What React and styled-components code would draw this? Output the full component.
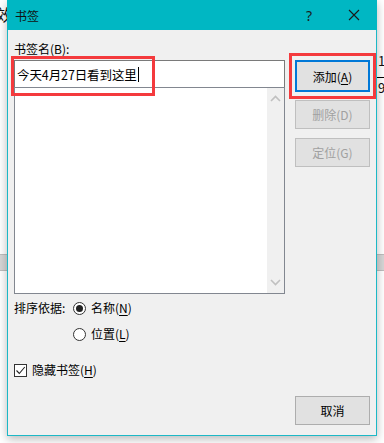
import React from 'react'
import styled, { createGlobalStyle } from 'styled-components'

const GlobalStyle = createGlobalStyle`
  html, body {
    margin: 0;
    padding: 0;
    background: #ffffff;
    font-family: "Noto Sans CJK SC", "Microsoft YaHei", "Noto Sans", sans-serif;
    font-size: 12px;
    color: #000;
  }
`;

const App = () => {
  return (
    <Page>
      <GlobalStyle />
      <Backdrop>
        <BackGlyph style={{ left: -4, top: 6 }}>效</BackGlyph>
        <BackGlyph style={{ left: 378, top: 54, fontSize: 13 }}>1</BackGlyph>
        <BackRule />
        <BackGlyph style={{ left: 378, top: 81, fontSize: 13 }}>9</BackGlyph>
        <GrayBand />
      </Backdrop>

      <Dialog>
        <TitleBar>
          <Title>书签</Title>
          <TitleButtons>
            <Help>?</Help>
            <CloseIcon width="12" height="12" viewBox="0 0 12 12">
              <path d="M1 1 L11 11 M11 1 L1 11" stroke="#1a1a1a" strokeWidth="1.1" fill="none" />
            </CloseIcon>
          </TitleButtons>
        </TitleBar>

        <Body>
          <Main>
            <LeftCol>
              <Label>书签名(<U>B</U>):</Label>
              <NameInput>
                今天4月27日看到这里<Caret />
              </NameInput>
              <ListBox>
                <ListArea />
                <ScrollBar>
                  <Chevron width="11" height="7" viewBox="0 0 11 7">
                    <path d="M1 6 L5.5 1.5 L10 6" stroke="#c0c0c0" strokeWidth="1.6" fill="none" />
                  </Chevron>
                  <Chevron width="11" height="7" viewBox="0 0 11 7">
                    <path d="M1 1 L5.5 5.5 L10 1" stroke="#c0c0c0" strokeWidth="1.6" fill="none" />
                  </Chevron>
                </ScrollBar>
              </ListBox>
              <SortRow>
                <SortLabel>排序依据:</SortLabel>
                <RadioGroup>
                  <RadioItem>
                    <Radio $checked />
                    <span>名称(<U>N</U>)</span>
                  </RadioItem>
                  <RadioItem>
                    <Radio />
                    <span>位置(<U>L</U>)</span>
                  </RadioItem>
                </RadioGroup>
              </SortRow>
              <CheckRow>
                <CheckBox>
                  <svg width="11" height="11" viewBox="0 0 11 11">
                    <path d="M1.5 5.5 L4.3 8.5 L9.8 2" stroke="#222" strokeWidth="1.1" fill="none" />
                  </svg>
                </CheckBox>
                <span>隐藏书签(<U>H</U>)</span>
              </CheckRow>
            </LeftCol>

            <RightCol>
              <Button $default>添加(<U>A</U>)</Button>
              <Button $disabled>删除(D)</Button>
              <Button $disabled>定位(G)</Button>
            </RightCol>
          </Main>

          <Footer>
            <Button>取消</Button>
          </Footer>
        </Body>

        <Highlight style={{ left: 3, top: 56, width: 138, height: 34 }} />
        <Highlight style={{ left: 281, top: 53, width: 81, height: 40 }} />
      </Dialog>
    </Page>
  )
}

export default App;

const Page = styled.div`
  position: relative;
  width: 384px;
  height: 443px;
  overflow: hidden;
  padding-left: 7px;
  box-sizing: border-box;
`;

const Backdrop = styled.div`
  position: absolute;
  inset: 0;
`;

const BackGlyph = styled.span`
  position: absolute;
  font-size: 16px;
  color: #111;
  line-height: 1;
`;

const BackRule = styled.div`
  position: absolute;
  left: 377px;
  top: 77px;
  width: 10px;
  height: 1px;
  background: #000;
`;

const GrayBand = styled.div`
  position: absolute;
  left: 0;
  right: 0;
  top: 254px;
  height: 15px;
  background: #d6d6d6;
  border-top: 1px solid #bdbdbd;
  border-bottom: 1px solid #bdbdbd;
`;

const Dialog = styled.div`
  position: relative;
  width: 370px;
  height: 436px;
  box-sizing: border-box;
  background: #f0f0f0;
  border: 1px solid #1cb8c6;
  border-top: none;
  box-shadow: 0 3px 9px rgba(0, 0, 0, 0.28);
  display: flex;
  flex-direction: column;
`;

const TitleBar = styled.div`
  height: 30px;
  margin: 0 -1px;
  background: #00b7c3;
  display: flex;
  align-items: center;
  justify-content: space-between;
  padding: 0 0 0 8px;
`;

const Title = styled.span`
  font-size: 12px;
  color: #111;
`;

const TitleButtons = styled.div`
  display: flex;
  align-items: center;
  gap: 36px;
  padding-right: 17px;
  height: 100%;
`;

const Help = styled.span`
  font-family: "Segoe UI", "Noto Sans", sans-serif;
  font-size: 14px;
  color: #1a1a1a;
`;

const CloseIcon = styled.svg`
  display: block;
`;

const Body = styled.div`
  flex: 1;
  display: flex;
  flex-direction: column;
  padding: 11px 6px 10px 6px;
`;

const Main = styled.div`
  display: flex;
  justify-content: space-between;
`;

const LeftCol = styled.div`
  width: 271px;
  display: flex;
  flex-direction: column;
`;

const RightCol = styled.div`
  width: 75px;
  display: flex;
  flex-direction: column;
  gap: 9px;
  padding-top: 19px;
`;

const Label = styled.div`
  line-height: 16px;
  height: 16px;
  margin-bottom: 3px;
`;

const U = styled.span`
  text-decoration: underline;
  text-underline-offset: 2px;
`;

const NameInput = styled.div`
  height: 27px;
  box-sizing: border-box;
  background: #fff;
  border: 1px solid #7a7a7a;
  border-bottom: none;
  display: flex;
  align-items: center;
  padding-left: 2px;
  font-size: 12.5px;
  letter-spacing: -0.1px;
`;

const Caret = styled.span`
  display: inline-block;
  width: 1px;
  height: 15px;
  background: #000;
  margin-left: 1px;
`;

const ListBox = styled.div`
  height: 207px;
  box-sizing: border-box;
  border: 1px solid #828790;
  background: #fff;
  display: flex;
`;

const ListArea = styled.div`
  flex: 1;
`;

const ScrollBar = styled.div`
  width: 17px;
  background: #f0f0f0;
  display: flex;
  flex-direction: column;
  justify-content: space-between;
  align-items: center;
  padding: 7px 0 7px;
`;

const Chevron = styled.svg`
  display: block;
`;

const SortRow = styled.div`
  display: flex;
  margin-top: 6px;
`;

const SortLabel = styled.span`
  line-height: 16px;
  width: 59px;
`;

const RadioGroup = styled.div`
  display: flex;
  flex-direction: column;
  gap: 10px;
`;

const RadioItem = styled.div`
  display: flex;
  align-items: center;
  gap: 5px;
  line-height: 16px;
`;

const Radio = styled.span`
  width: 13px;
  height: 13px;
  box-sizing: border-box;
  border-radius: 50%;
  border: 1px solid #333;
  background: #fff;
  display: flex;
  align-items: center;
  justify-content: center;
  &::after {
    content: '';
    width: 7px;
    height: 7px;
    border-radius: 50%;
    background: #222;
    display: ${p => (p.$checked ? 'block' : 'none')};
  }
`;

const CheckRow = styled.div`
  display: flex;
  align-items: center;
  gap: 5px;
  line-height: 16px;
  margin-top: 20px;
`;

const CheckBox = styled.span`
  width: 13px;
  height: 13px;
  box-sizing: border-box;
  border: 1px solid #333;
  background: #fff;
  display: flex;
  align-items: center;
  justify-content: center;
`;

const Button = styled.div`
  width: 75px;
  height: ${p => (p.$default ? '32px' : '29px')};
  box-sizing: border-box;
  background: #e1e1e1;
  border: ${p => (p.$default ? '2px solid #0078d7' : p.$disabled ? '1px solid #bfbfbf' : '1px solid #adadad')};
  color: ${p => (p.$disabled ? '#a0a0a0' : '#000')};
  display: flex;
  align-items: center;
  justify-content: center;
  font-size: 12px;
  margin-bottom: ${p => (p.$default ? '-1px' : '0')};
`;

const Footer = styled.div`
  margin-top: auto;
  display: flex;
  justify-content: flex-end;
`;

const Highlight = styled.div`
  position: absolute;
  border: 3px solid #f43a3d;
  pointer-events: none;
`;
